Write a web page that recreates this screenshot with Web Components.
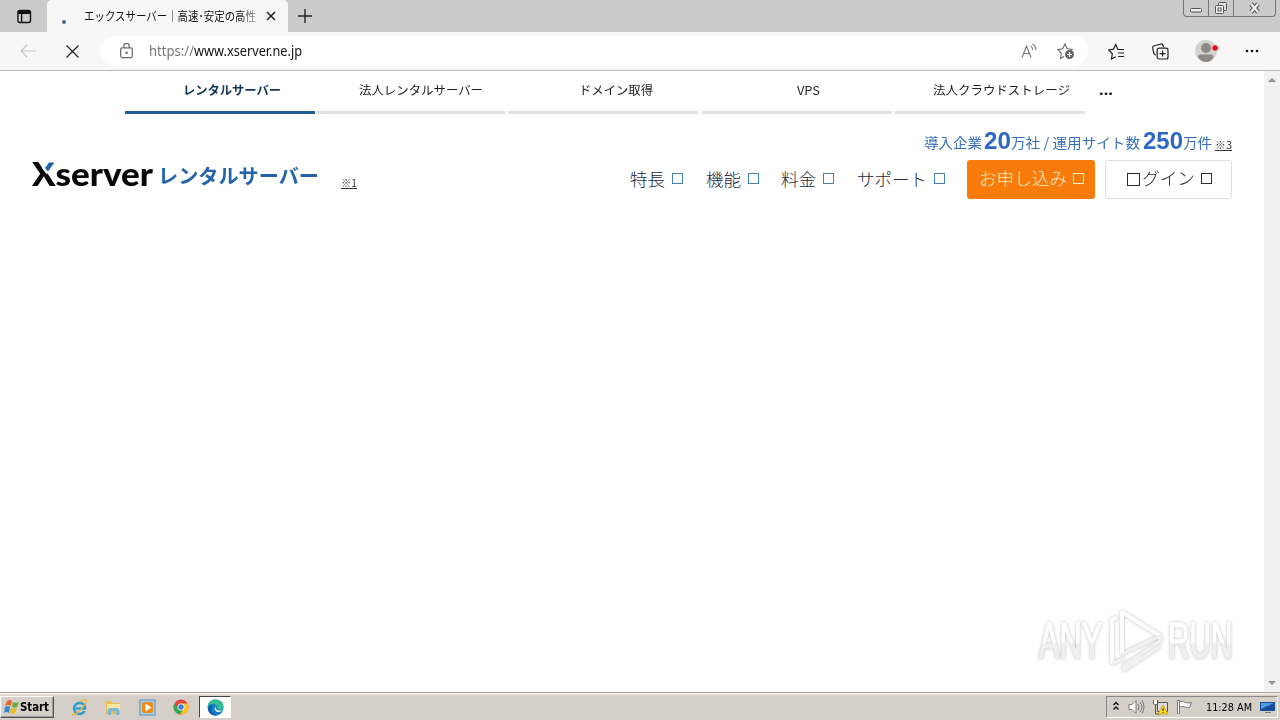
<!DOCTYPE html>
<html lang="ja">
<head>
<meta charset="utf-8">
<title>エックスサーバー</title>
<style>
html,body{margin:0;height:100%;overflow:hidden;background:#fff}
body{font-family:"Noto Sans","Noto Sans CJK JP",sans-serif}
</style>
</head>
<body>
<desktop-screen></desktop-screen>
<script>
const define = (name, markup, ready) => customElements.define(name, class extends HTMLElement {
  constructor() { super(); this.attachShadow({ mode: "open" }).innerHTML = markup; }
  connectedCallback() { if (ready) ready.call(this, this.shadowRoot); }
});

/* A single line of text condensed or stretched to the width "w". */
define("fit-text", `<style>:host{display:block;flex:none;white-space:nowrap;line-height:1.2}
span{display:inline-block;transform-origin:0 50%;text-decoration:inherit}</style><span><slot></slot></span>`, function (root) {
  const w = +this.getAttribute("w"), span = root.querySelector("span");
  this.style.width = w + "px";
  span.style.transform = `scaleX(${w / span.getBoundingClientRect().width})`;
});

define("tab-strip", `<style>
:host{display:flex;height:32px;background:#cbcbcb;align-items:stretch;color:#111}
.side{width:47px;display:flex;align-items:center;padding-left:17px;box-sizing:border-box}
.tab{width:241px;background:#f7f7f7;border-radius:5px 5px 0 0;display:flex;align-items:center;box-sizing:border-box;padding-left:15px}
.dot{width:4px;height:4px;border-radius:50%;background:#4b6f8c;margin:12px 18px 0 0}
fit-text{font:12px/18px "Noto Sans CJK JP",sans-serif;color:#111;-webkit-mask-image:linear-gradient(90deg,#000 90%,#0006)}
svg{display:block;flex:none}
.x{margin-left:10px}.plus{margin:8px 0 0 9px}
.win{margin-left:auto;margin-right:4px;width:93px;height:17px;border:1px solid #777;border-top:0;border-radius:0 0 4px 4px;display:flex;box-sizing:border-box}
</style>
<div class="side"><svg width="15" height="15" viewBox="0 0 15 15" fill="none" stroke="#111" stroke-width="1.4"><rect x=".9" y="1.5" width="12.600" height="12" rx="1.800"/><path d="M1 3.500h12.500" stroke-width="3"/><path d="M4.600 4v9"/></svg></div>
<div class="tab"><i class="dot"></i><fit-text w="172">エックスサーバー｜高速･安定の高性</fit-text><svg class="x" width="10" height="10" viewBox="0 0 10 10" stroke="#222" stroke-width="1.6"><path d="M1 1l8 8M9 1L1 9"/></svg></div>
<svg class="plus" width="16" height="16" viewBox="0 0 16 16" stroke="#222" stroke-width="1.4"><path d="M8 1v14M1 8h14"/></svg>
<div class="win"><svg width="91" height="16" viewBox="0 0 91 16" fill="none" stroke="#555"><path d="M24.5 0v16M49.5 0v16" stroke="#777"/><rect x="6.5" y="8.500" width="11" height="3.500" rx="1" fill="#eee"/><rect x="34.500" y="2.500" width="8" height="8" rx="1" fill="#ddd"/><rect x="31.500" y="5.500" width="8" height="8" rx="1" fill="#eee"/><rect x="34" y="8" width="3" height="3"/><path d="M67 4l7 8M74 4l-7 8" stroke-width="4.500"/><path d="M67 4l7 8M74 4l-7 8" stroke="#eee" stroke-width="2.500"/></svg></div>`);

define("address-bar", `<style>
:host{display:flex;height:39px;background:#f7f7f7;border-bottom:1px solid #b9b9b9;box-sizing:border-box;align-items:center}
svg{display:block;flex:none}
.back{margin-left:20px}.stop{margin-left:29px}
.box{width:988px;height:30px;border-radius:15px;background:#fff;margin-left:21px;display:flex;align-items:center;box-sizing:border-box;padding-left:20px}
.url{display:flex;margin-left:16px;font:14px/20px "Noto Sans","Noto Sans CJK JP",sans-serif;color:#111}
.url .p{color:#777}
.read{margin-left:719px}.star{margin-left:19px}
.fav{margin-left:20px}.col{margin-left:27px}.me{margin-left:26px}.more{margin-left:25px}
</style>
<svg class="back" width="17" height="14" viewBox="0 0 17 14" fill="none" stroke="#c4c4c4" stroke-width="1.2"><path d="M16 7H1M7 1L1 7l6 6"/></svg>
<svg class="stop" width="13" height="13" viewBox="0 0 13 13" stroke="#222" stroke-width="1.2"><path d="M.5.5l12 12M12.500 .5l-12 12"/></svg>
<div class="box">
<svg width="13" height="16" viewBox="0 0 13 16" fill="none" stroke="#666" stroke-width="1.2"><rect x=".7" y="4.800" width="11.600" height="9.800" rx="1.500"/><path d="M3.800 4.800V3a2.700 2.700 0 015.400 0v1.800"/><circle cx="6.500" cy="9.700" r=".6" fill="#666"/></svg>
<div class="url"><fit-text class="p" w="45">https://</fit-text><fit-text w="108">www.xserver.ne.jp</fit-text></div>
<svg class="read" width="17" height="17" viewBox="0 0 17 17" fill="none" stroke="#777" stroke-width="1.100"><path d="M1 14.500L5.500 3l4.500 11.500M2.600 10.500h5.800M9.500 3q2 1 2.200 4M11.500 1q3.300 1.800 3.500 6"/></svg>
<svg class="star" width="18" height="18" viewBox="0 0 18 18" fill="none" stroke="#666" stroke-width="1.100"><path d="M7 14.500l-3.500 2 .8-5.200L.8 7.600l4.800-.8L8 2l2.200 4.800 5 .6-1.300 1.300"/><circle cx="12.500" cy="12.500" r="4.500" fill="#666" stroke="none"/><path d="M12.500 10v5M10 12.500h5" stroke="#fff"/></svg>
</div>
<svg class="fav" width="17" height="17" viewBox="0 0 17 17" fill="none" stroke="#222" stroke-width="1.200"><path d="M10.500 6.500H9.800L7.700 1.500 5.500 6.200.8 7l3.500 3.800-.8 5.200 4.200-2.200M10.500 6.500H16M10 10h6M10 13.500h6"/></svg>
<svg class="col" width="17" height="17" viewBox="0 0 17 17" fill="none" stroke="#222" stroke-width="1.200"><path d="M4 12L2.800 11.500Q2 11 1.700 10L.7 5Q.5 3.500 1.800 3L9 1q1.300-.3 1.900 1L11.500 4"/><rect x="5.200" y="5.200" width="10.800" height="10.800" rx="2"/><path d="M10.600 7.600v6M7.600 10.600h6"/></svg>
<svg class="me" width="24" height="24" viewBox="0 0 24 24"><circle cx="11" cy="12" r="11" fill="#d2d2ce"/><circle cx="11" cy="9" r="5" fill="#8c8986"/><path d="M3 18Q3 15.500 6 15.500h9.500q3 0 3 2.500-2.500 5-7.500 5T3 18" fill="#8c8986"/><circle cx="20" cy="9" r="3.300" fill="#d80b20" stroke="#f4dada"/></svg>
<svg class="more" width="16" height="6" viewBox="0 0 16 6" fill="#111"><circle cx="3" cy="3" r="1.300"/><circle cx="8" cy="3" r="1.300"/><circle cx="13" cy="3" r="1.300"/></svg>`);

define("service-tab", `<style>:host{display:flex;box-sizing:border-box;flex:none;height:43px;border-bottom:3px solid #e1e1e1;font:12px/18px "Noto Sans CJK JP",sans-serif;color:#222;padding-top:12px}
:host([active]){border-color:#245f94;color:#123456;font-weight:700}</style><slot></slot>`);

define("service-tabs", `<style>:host{display:flex;height:43px;padding-left:125px}
.dots{font:bold 14px/18px "Noto Sans",sans-serif;color:#222;margin:10px 0 0 14px}</style>
<service-tab active style="width:190px;padding-left:58px"><fit-text w="98">レンタルサーバー</fit-text></service-tab>
<service-tab style="width:188px;margin-left:2px;padding-left:42px"><fit-text w="124">法人レンタルサーバー</fit-text></service-tab>
<service-tab style="width:190px;margin-left:3px;padding-left:71px"><fit-text w="74">ドメイン取得</fit-text></service-tab>
<service-tab style="width:190px;margin-left:4px;padding-left:95px"><fit-text w="23">VPS</fit-text></service-tab>
<service-tab style="width:190px;margin-left:3px;padding-left:38px"><fit-text w="137">法人クラウドストレージ</fit-text></service-tab>
<fit-text class="dots" w="14">...</fit-text>`);

/* Site logo, headline figures and main navigation. */
define("site-header", `<style>
:host{display:flex;height:96px;padding:0 32px;box-sizing:border-box;font-family:"Noto Sans CJK JP",sans-serif;color:#28293a}
.logo{display:flex;padding-top:42px}
.name{display:flex;position:relative;font:900 32px/36px Lato,sans-serif;color:#080808;margin-top:-1px}
.name svg{position:absolute;left:9px;top:6px}
.jp{font:700 20px/30px "Noto Sans CJK JP",sans-serif;color:#2564aa;margin:5px 0 0 5px}
.note{font:10px/13px "Noto Sans CJK JP",sans-serif;text-decoration:underline;color:#333}
.logo .note{margin:20px 0 0 22px}
.right{margin-left:auto;display:flex;flex-direction:column;align-items:flex-end}
.stats{display:flex;height:46px;box-sizing:border-box;padding-top:11px;align-items:center;color:#3a70b8;font-size:14px}
.stats b{font:700 23px/28px "Liberation Sans",sans-serif;color:#2e68c4;display:flex;margin:-1px 0 0 2px}
.stats .note{margin:4px 0 0 3px}
nav{display:flex;height:39px;align-items:center;font-size:17.500px;font-weight:300}
nav>span{display:flex;align-items:center}
nav fit-text{margin-top:-2px}
i{box-sizing:border-box;width:11px;height:11px;border:1px solid #4483b8;margin:-2px 0 0 7px;flex:none}
.btn{height:39px;box-sizing:border-box;border-radius:3px}
.go{width:128px;background:#f97b0c;color:#fff4cd;padding-left:12px;margin-left:22px}
.in{width:127px;border:1px solid #ddd;padding-left:21px;margin-left:10px}
.go i,.in i{border-color:currentColor;margin:-3px 0 0 6px}
.btn fit-text{margin-top:-4px}
.in i.lo{width:13px;height:13px;margin:-1px 2px 0 0}
</style>
<div class="logo"><div class="name"><fit-text w="121">Xserver</fit-text><svg width="16" height="14" viewBox="0 0 16 14"><path d="M1 7L5 0H16L8 12 5.500 13z" fill="#fff"/><path d="M8 1.500h5.500L7 10.500 4 7z" fill="#2564aa"/></svg></div><fit-text class="jp" w="161">レンタルサーバー</fit-text><fit-text class="note" w="16">※1</fit-text></div>
<div class="right">
<div class="stats"><fit-text w="58">導入企業</fit-text><b><fit-text w="27">20</fit-text></b><fit-text w="129">万社 / 運用サイト数</fit-text><b style="margin-left:3px"><fit-text w="40">250</fit-text></b><fit-text w="29">万件</fit-text><fit-text class="note" w="17">※3</fit-text></div>
<nav><span><fit-text w="35">特長</fit-text><i></i></span><span style="margin-left:23px"><fit-text w="35">機能</fit-text><i></i></span><span style="margin-left:22px"><fit-text w="35">料金</fit-text><i></i></span><span style="margin-left:23px"><fit-text w="70">サポート</fit-text><i></i></span>
<span class="btn go"><fit-text w="88">お申し込み</fit-text><i></i></span><span class="btn in"><i class="lo"></i><fit-text w="53">グイン</fit-text><i></i></span></nav>
</div>`);

define("page-scrollbar", `<style>:host{display:flex;flex-direction:column;justify-content:space-between;align-items:center;width:16px;background:#f1f1f1;padding:6px 0;box-sizing:border-box}svg{display:block}</style>
<svg width="8" height="5"><path d="M0 5l4-4 4 4z" fill="#929292"/></svg><svg width="8" height="5"><path d="M0 0h8L4 4z" fill="#929292"/></svg>`);

define("any-run-mark", `<style>:host{display:block;width:220px;height:80px;filter:drop-shadow(0 0 1.500px #0004)}svg{display:block}text{font:400 50px "Liberation Sans",sans-serif;fill:url(#g);stroke:url(#g);stroke-width:1.500px}</style>
<svg width="220" height="80" viewBox="0 0 220 80"><defs><linearGradient id="g" x2="0" y2="1"><stop offset=".53" stop-color="#fff"/><stop offset=".56" stop-color="#efefef"/></linearGradient></defs>
<g transform="translate(9 58) scale(.625 1)"><text textLength="101" lengthAdjust="spacingAndGlyphs">ANY</text></g>
<g fill="none" stroke="#fdfdfd" stroke-width="4" stroke-linejoin="round"><path d="M92 54V12l38 24M82 64V20l5-3"/><path d="M92 54l38-18v5L94 66v4l36-24M82 64l12-6" stroke="#f1f1f1" stroke-width="3.500"/></g>
<g transform="translate(138 58) scale(.625 1)"><text textLength="103" lengthAdjust="spacingAndGlyphs">RUN</text></g></svg>`);

define("win-taskbar", `<style>
:host{display:flex;height:28px;background:#d5cfc8;border-top:1px solid #aaa;box-sizing:border-box;padding-top:3px;box-shadow:inset 0 2px #eee9e3;align-items:flex-start;color:#000}
svg{display:block;flex:none}
.start{width:54px;height:22px;box-sizing:border-box;border:1px solid;border-color:#fff #555 #555 #fff;box-shadow:inset -1px -1px #999;display:flex;align-items:center;padding-left:3px;font:bold 11.500px/16px "DejaVu Sans",sans-serif}
.start fit-text{margin:1px 0 0 1px}
.ic{margin:3px 0 0 17px}
.edge{width:32px;height:22px;box-sizing:border-box;border:1px solid;border-color:#444 #fff #fff #444;background:#fff;display:flex;align-items:center;justify-content:center;margin-left:10px}
.tray{margin-left:auto;margin-right:2px;width:172px;height:22px;box-sizing:border-box;border:1px solid;border-color:#888 #fff #fff #888;display:flex;align-items:center;font:11px/16px "DejaVu Sans",sans-serif}
</style>
<div class="start"><svg width="15" height="16" viewBox="0 0 15 16"><path d="M3 2q3-2 5 0L7 7Q4 5 1 7z" fill="#e56628"/><path d="M9 3q3 1.500 6 0l-2 5q-3 1.500-5 0z" fill="#6dad36"/><path d="M1 8q3-2 5 0l-1 6q-3-2-5 0z" fill="#328bd0"/><path d="M7 9q3 1.500 6 0l-2 5q-3 1.500-5 0z" fill="#efb622"/></svg><fit-text w="29">Start</fit-text></div>
<svg class="ic" width="17" height="17" viewBox="0 0 17 17" fill="none"><path d="M13.500 12q-1.500 3-5 3A5.500 5.500 0 018.500 4q5.500 0 5.500 5.500H4.500" stroke="#2d9bd4" stroke-width="2.400"/><path d="M2 14Q0 16 2 16 5 16 11 9 17 2 15 1q-2-1-6 2" stroke="#e8b632" stroke-width="1.200"/></svg>
<svg class="ic" width="17" height="17" viewBox="0 0 17 17"><path d="M1 2h5l1 2h8v11H1z" fill="#e6bd54"/><path d="M2 5h13v6H2z" fill="#f7e59b"/><path d="M3 16v-5q0-2 2-2h7q2 0 2 2v5h-3v-4H6v4z" fill="#74b8d8"/></svg>
<svg class="ic" width="17" height="17" viewBox="0 0 17 17"><rect x="1" y="1" width="15" height="15" fill="#a8d1eb" stroke="#4f92bd"/><rect x="3" y="3" width="11" height="11" rx="2" fill="#ef8c18"/><path d="M6.500 4.500v8l6-4z" fill="#fff"/></svg>
<svg class="ic" width="16" height="16" viewBox="0 0 16 16"><circle cx="8" cy="8" r="7.500" fill="#e24636"/><path d="M1.200 4.800A7.500 7.500 0 007 15.400L10.500 9.500H5z" fill="#34a853"/><path d="M8 4.500h6.700A7.500 7.500 0 017 15.430L11 9z" fill="#f9c525"/><circle cx="8" cy="8" r="3.500" fill="#fff"/><circle cx="8" cy="8" r="2.700" fill="#3d7de0"/></svg>
<div class="edge"><svg width="17" height="17" viewBox="0 0 17 17"><circle cx="8.500" cy="8.500" r="8" fill="#147fc5"/><path d="M.7 8Q1 .5 8.500.5q8 .5 8 7 0 4-5 3-2-.5-1-2Q10 5 6 5 2 5 .7 8" fill="#35bd91"/><path d="M6 6Q3 9 5 13q2 3 6 3Q5 18 1.500 12q-2-5 4.500-6" fill="#155aa3"/><path d="M9 7q-1.500 1.500 0 3 2.500 3 6.500 1Q13 14 9.500 12.500 6 10 9 7" fill="#fff"/></svg></div>
<div class="tray">
<svg style="margin-left:6px" width="6" height="12" viewBox="0 0 6 12" fill="none" stroke="#111" stroke-width="1.400"><path d="M.5 4L3 1.500 5.500 4M.5 8.500L3 6l2.500 2.500"/></svg>
<svg style="margin-left:9px" width="17" height="16" viewBox="0 0 17 16" fill="none" stroke="#777"><path d="M1 5.500h3l4-4v13l-4-4H1z" fill="#fff"/><path d="M10 5q2 3 0 6M12 3q4 5 0 10M14 1.500q4 6.500 0 13" /></svg>
<svg style="margin-left:7px" width="17" height="16" viewBox="0 0 17 16"><path d="M5.500 3.500h10v9h-10z" fill="#ddd" stroke="#555"/><path d="M1.500 1v4h4V1M3.500 5v10h5" fill="none" stroke="#555"/><path d="M2 1h3v4H2z" fill="#fff"/><path d="M11 6l5 9H6z" fill="#ffdc25" stroke="#c59800" stroke-width=".7"/><path d="M11 9v3m0 1v1" stroke="#222"/></svg>
<svg style="margin-left:7px" width="17" height="16" viewBox="0 0 17 16" fill="#fff" stroke="#777"><path d="M1.500 1.500h2v13h-2zM3.500 2.500q3-1 6 1 3 1 6 0l-2 5q-2 1-4-.5-3-1-6 0z"/></svg>
<fit-text style="margin-left:13px;margin-top:1px" w="46">11:28 AM</fit-text>
<svg style="margin-left:8px" width="16" height="13" viewBox="0 0 16 13"><path d="M0 1h15v9H0z" fill="#164e98"/><path d="M1 2h13L1 8z" fill="#4d9be0"/><path d="M5 11h6v1H5z" fill="#777"/></svg>
</div>`);

define("desktop-screen", `<style>
:host{display:flex;flex-direction:column;width:1280px;height:720px;background:#fff;position:relative}
.view{display:flex;flex:1;min-height:0}.page{flex:1;min-width:0}
any-run-mark{position:absolute;left:1030px;top:600px}
</style><tab-strip></tab-strip><address-bar></address-bar>
<div class="view"><div class="page"><service-tabs></service-tabs><site-header></site-header></div><page-scrollbar></page-scrollbar></div>
<win-taskbar></win-taskbar><any-run-mark></any-run-mark>`);
</script>
</body>
</html>
